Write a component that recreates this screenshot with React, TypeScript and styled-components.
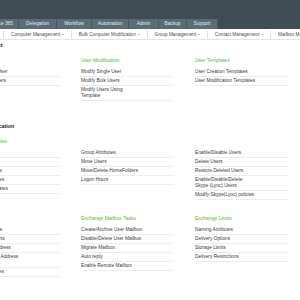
import styled, { createGlobalStyle } from 'styled-components';

const GlobalStyle = createGlobalStyle`
  html, body {
    margin: 0;
    padding: 0;
    background: #fff;
    overflow: hidden;
  }
  body {
    font-family: "Liberation Sans", Arial, sans-serif;
  }
`;

const Header = styled.header`
  background: #3f4c54;
  padding-top: 19px;
`;

const TabRow = styled.nav`
  display: flex;
  height: 10px;
  margin-left: -14px;
`;

const Tab = styled.div<{ $w: number }>`
  flex: none;
  box-sizing: border-box;
  width: ${(p) => p.$w}px;
  background: #5b6c75;
  border-right: 1px solid #4a5860;
  color: #e4eaed;
  font-size: 4.8px;
  line-height: 10px;
  text-align: center;
  white-space: nowrap;
`;

const SubNav = styled.div`
  display: flex;
  align-items: center;
  height: 10px;
  padding-left: 3px;
  background: #fff;
  border-bottom: 1px solid #e3e3e3;
`;

const SubItem = styled.div`
  display: flex;
  align-items: center;
  gap: 1.5px;
  height: 7px;
  padding: 0 7px;
  border-left: 1px solid #dcdcdc;
  font-size: 4.7px;
  color: #4a4a4a;
  white-space: nowrap;
`;

const Caret = styled.span`
  width: 0;
  height: 0;
  border-left: 1.2px solid transparent;
  border-right: 1.2px solid transparent;
  border-top: 1.5px solid #666;
`;

const Content = styled.main`
  margin-left: -44px;
  padding-top: 1px;
`;

const Section = styled.section`
  & + & {
    margin-top: 21px;
  }
`;

const SectionTitle = styled.h2`
  margin: 0;
  font-size: 5.4px;
  font-weight: bold;
  line-height: 8px;
  color: #222;
  white-space: nowrap;
`;

const Block = styled.div`
  display: grid;
  grid-template-columns: repeat(3, 93px);
  column-gap: 21px;
  align-items: start;
  padding-left: 11px;
  margin-top: 7px;

  & + & {
    margin-top: 14px;
  }
`;

const Column = styled.div`
  display: flex;
  flex-direction: column;
`;

const ColTitle = styled.h3`
  margin: 0 0 4px;
  height: 8px;
  line-height: 8px;
  font-size: 5px;
  font-weight: normal;
  color: #62b043;
  white-space: nowrap;
`;

const Item = styled.div`
  padding: 1px 0;
  line-height: 6px;
  font-size: 4.8px;
  color: #383838;
  border-bottom: 1px solid #ececec;
  white-space: pre;
`;

type Col = { title?: string; items: string[] };

const tabs: [string, number][] = [
  ['Office 365', 33],
  ['Delegation', 38],
  ['Workflow', 35],
  ['Automation', 37],
  ['Admin', 30],
  ['Backup', 28],
  ['Support', 31],
];

const menus = [
  'Computer Management',
  'Bulk Computer Modification',
  'Group Management',
  'Contact Management',
  'Mailbox Management',
];

const sections: { title: string; blocks: Col[][] }[] = [
  {
    title: 'User Management',
    blocks: [
      [
        { title: 'User Creation', items: ['Create Single User', 'Create Bulk Users'] },
        {
          title: 'User Modification',
          items: ['Modify Single User', 'Modify Bulk Users', 'Modify Users Using\nTemplate'],
        },
        {
          title: 'User Templates',
          items: ['User Creation Templates', 'User Modification Templates'],
        },
      ],
    ],
  },
  {
    title: 'Bulk User Modification',
    blocks: [
      [
        {
          title: 'General Attributes',
          items: ['Unlock Users', 'Set Manager', 'Remove Groups', 'Modify Properties', 'Update Certificates'],
        },
        {
          items: ['Group Attributes', 'Move Users', 'Move/Delete HomeFolders', 'Logon Hours'],
        },
        {
          items: [
            'Enable/Disable Users',
            'Delete Users',
            'Restore Deleted Users',
            'Enable/Disable/Delete\nSkype (Lync) Users',
            'Modify Skype(Lync) policies',
          ],
        },
      ],
      [
        {
          title: 'Mail Attributes',
          items: [
            'Set Alias Names',
            'Modify Mail Alerts',
            'Set Primary Address',
            'Set Forwarding Address\nPolicy',
            'Mailbox Features',
          ],
        },
        {
          title: 'Exchange Mailbox Tasks',
          items: [
            'Create/Archive User Mailbox',
            'Disable/Delete User Mailbox',
            'Migrate Mailbox',
            'Auto reply',
            'Enable Remote Mailbox',
          ],
        },
        {
          title: 'Exchange Limits',
          items: ['Naming Attributes', 'Delivery Options', 'Storage Limits', 'Delivery Restrictions'],
        },
      ],
    ],
  },
];

const App = () => {
  return (
    <>
      <GlobalStyle />
      <Header>
        <TabRow>
          {tabs.map(([label, w]) => (
            <Tab key={label} $w={w}>
              {label}
            </Tab>
          ))}
        </TabRow>
      </Header>
      <SubNav>
        {menus.map((m) => (
          <SubItem key={m}>
            {m}
            <Caret />
          </SubItem>
        ))}
      </SubNav>
      <Content>
        {sections.map((s) => (
          <Section key={s.title}>
            <SectionTitle>{s.title}</SectionTitle>
            {s.blocks.map((cols, i) => (
              <Block key={i}>
                {cols.map((c, j) => (
                  <Column key={j}>
                    <ColTitle>{c.title}</ColTitle>
                    {c.items.map((it) => (
                      <Item key={it}>{it}</Item>
                    ))}
                  </Column>
                ))}
              </Block>
            ))}
          </Section>
        ))}
      </Content>
    </>
  );
};

export default App;
